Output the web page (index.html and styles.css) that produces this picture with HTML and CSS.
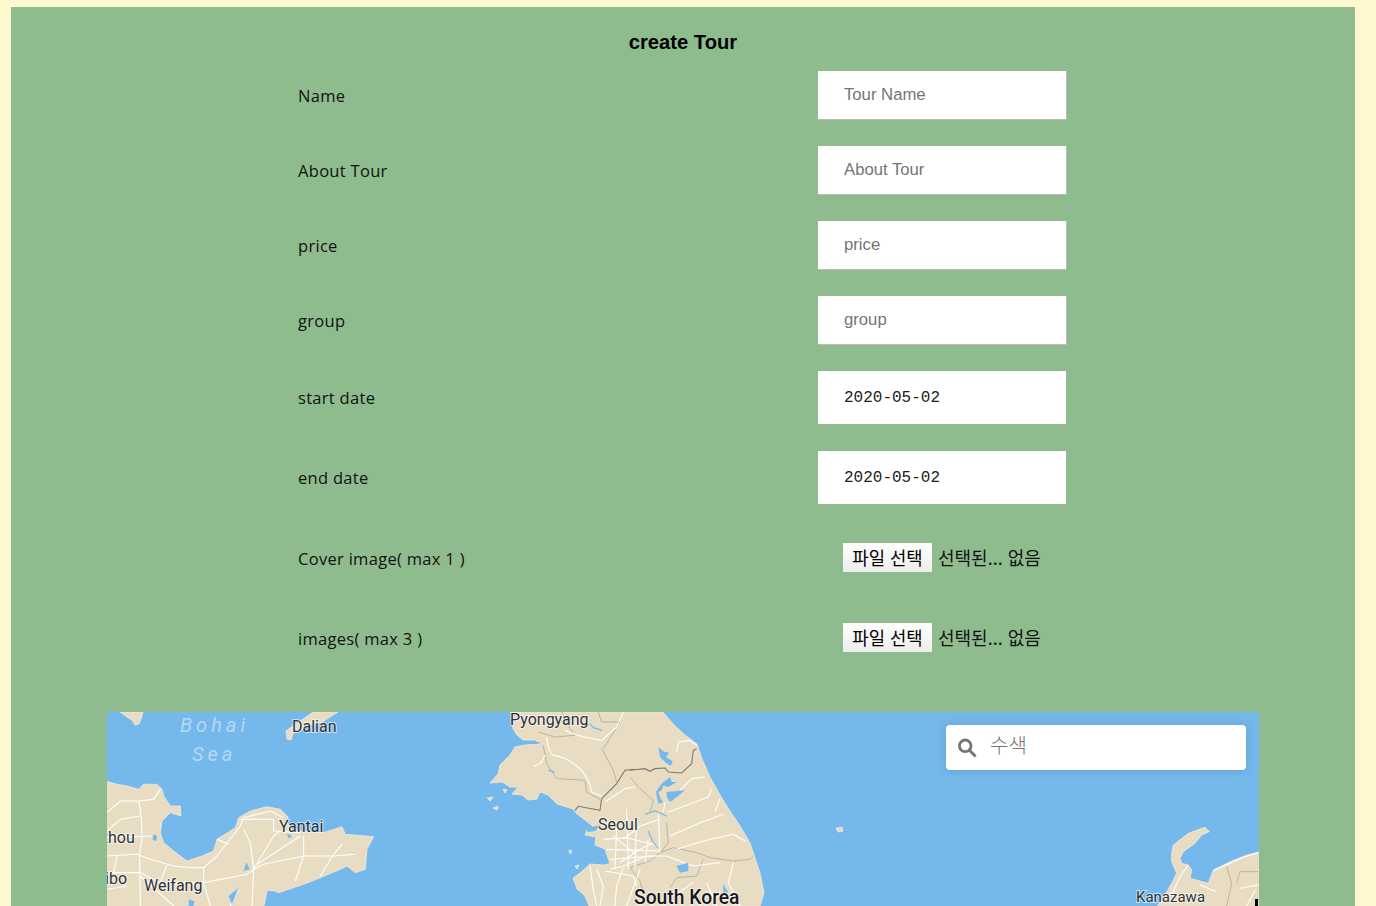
FILE: index.html
```html
<!DOCTYPE html>
<html lang="ko">
<head>
    <meta charset="UTF-8">
    <meta name="viewport" content="width=device-width, initial-scale=1.0">
    <title>create Tour</title>
    <link rel="stylesheet" href="styles.css">
</head>
<body>
    <div class="page">
        <h3 class="title">create Tour</h3>
        <form class="tour-form">
            <div class="row">
                <label class="row-label">Name</label>
                <input class="field" type="text" placeholder="Tour Name">
            </div>
            <div class="row">
                <label class="row-label">About Tour</label>
                <input class="field" type="text" placeholder="About Tour">
            </div>
            <div class="row">
                <label class="row-label">price</label>
                <input class="field" type="text" placeholder="price">
            </div>
            <div class="row">
                <label class="row-label">group</label>
                <input class="field" type="text" placeholder="group">
            </div>
            <div class="row row-tall">
                <label class="row-label row-label-date">start date</label>
                <input class="field field-date" type="text" value="2020-05-02">
            </div>
            <div class="row row-tall">
                <label class="row-label row-label-date">end date</label>
                <input class="field field-date" type="text" value="2020-05-02">
            </div>
            <div class="row row-tall">
                <label class="row-label">Cover image( max 1 )</label>
                <div class="file-pick">
                    <button class="file-button" type="button">파일 선택</button>
                    <span class="file-name">선택된... 없음</span>
                </div>
            </div>
            <div class="row row-tall">
                <label class="row-label">images( max 3 )</label>
                <div class="file-pick">
                    <button class="file-button" type="button">파일 선택</button>
                    <span class="file-name">선택된... 없음</span>
                </div>
            </div>
        </form>
        <div class="map">
            <svg class="map-art" viewBox="107 712 1152 194" width="1152" height="194">
                <!-- Liaodong tips -->
                <path class="land" d="M313 712L338 712L330 717L322 722L310 725L300 730L293 733L291 740L287 739L286 731L297 723L306 717ZM120 712L143 712L141 719L139 724L135 725L132 720L127 717Z"/>

                <!-- Shandong -->
                <g transform="translate(107 776) scale(0.3333)">
                    <path class="land" d="M-5 15L30 25L60 30L95 40L110 25L150 25L165 40L170 60L190 90L220 90L222 120L190 110L165 135L160 170L170 200L200 225L240 255L285 240L320 225L330 190L385 155L395 125L430 105L480 92L520 100L545 125L535 132L560 165L650 170L705 152L715 175L800 182L780 220L775 280L745 290L720 270L700 280L640 305L590 325L515 350L500 345L480 345L470 395L-5 395Z"/>
                    <g class="roads">
                        <path d="M0 110L40 75L95 75L140 70L160 40"/>
                        <path d="M95 75Q105 120 105 190L98 230L100 390"/>
                        <path d="M0 165L40 130L100 120"/>
                        <path d="M0 185L135 180"/>
                        <path d="M0 240L90 235L130 250L200 270L250 275L290 275L330 240L400 150L410 125L490 105L530 125"/>
                        <path d="M400 130L500 130L500 165L580 170"/>
                        <path d="M410 160L430 200L440 280L435 390"/>
                        <path d="M440 280L500 180L520 165"/>
                        <path d="M0 290L100 290L160 320L290 320L420 295L440 280L470 265L590 240L680 240L745 235"/>
                        <path d="M290 275L290 320L310 390"/>
                        <path d="M180 265L160 320"/>
                        <path d="M590 180L590 240L565 315"/>
                        <path d="M450 265L580 180"/>
                        <path d="M640 300L680 235L705 205"/>
                        <path d="M0 340L60 330M100 300L200 390M30 240L20 290"/>
                        <path d="M370 390L395 340M330 190L365 205"/>
                    </g>
                    <g class="lakes">
                        <path d="M140 175L150 180L148 195L137 192Z"/>
                        <path d="M418 258L428 280L410 285Z"/>
                        <path d="M245 370L262 375L260 390L245 390Z"/>
                        <path d="M365 360L395 335L375 385Z"/>
                        <path d="M480 345L510 348L495 362Z"/>
                        <path d="M475 385L490 378L495 390Z"/>
                        <path d="M540 172L555 180L545 188Z"/>
                    </g>
                </g>

                <!-- Korea -->
                <path class="land" d="M511 712L513 729L517 735L523 740L535 740L540 744L525 745L515 747L510 755L500 765L498 774L490 783L502 782L510 787L518 787L512 794L522 795L528 800L537 799L540 792L548 795L557 804L573 809L577 814L585 820L595 828L587 830L585 835L596 837L595 845L605 849L610 864L603 865L590 864L580 873L573 878L577 889L585 896L589 906L760 906L764 893L760 873L750 843L740 826L728 808L720 795L710 777L702 759L697 744L685 735L673 724L663 712Z"/>
                <path class="land" d="M487 798L493 797L490 801ZM503 789L507 790L505 793ZM836 828L842 827L843 831L838 832ZM493 808L498 806L497 810ZM575 866L579 865L577 869ZM569 850L572 851L570 854Z"/>

                <g transform="translate(485 712) scale(0.3333)">
                    <g class="borders">
                        <path d="M160 60L210 75L270 70L255 50L230 0"/>
                        <path d="M175 100L185 155L215 200L300 205L305 240L345 262"/>
                        <path d="M350 110L385 175L395 210"/>
                        <path d="M340 0L350 30L405 30L355 110"/>
                    </g>
                    <g class="roads">
                        <path d="M185 75Q190 120 205 130Q250 135 290 175Q315 205 320 240L350 252"/>
                        <path d="M240 55Q280 75 350 85L395 45L415 0"/>
                        <path d="M145 165L170 150L180 130"/>
                        <path d="M360 270L420 230L450 225"/>
                    </g>
                    <g class="streams">
                        <path d="M315 35L325 47L352 55"/>
                        <path d="M90 85L120 95L165 92"/>
                        <path d="M190 175L210 180"/>
                    </g>
                    <path class="border-strong" d="M270 295L280 283L345 295L350 260L395 215L420 175L450 172"/>
                </g>

                <g transform="translate(630 712) scale(0.3333)">
                    <g class="borders">
                        <path d="M0 195L25 225L70 265L60 300"/>
                    </g>
                    <g class="roads">
                        <path d="M140 120L145 90L180 85L200 100"/>
                        <path d="M225 195L185 200L150 235"/>
                        <path d="M245 230L235 255L170 280L115 300"/>
                        <path d="M100 300L105 270M270 260L255 300"/>
                    </g>
                    <g class="lakes">
                        <path d="M85 105L95 115L105 120L118 122L108 135L128 148L122 162L105 150L90 135Z"/>
                        <path d="M120 195L125 210L140 210L115 225L100 220L95 235L85 240L92 260L100 270L85 275L78 240L95 215Z"/>
                        <path d="M110 240L165 235L140 255L120 270L110 255Z"/>
                    </g>
                    <path class="border-strong" d="M0 175L45 170L60 178L75 170L105 168L115 180L155 183L185 155L190 115L200 110"/>
                </g>

                <g transform="translate(560 806) scale(0.3333)">
                    <g class="borders">
                        <path d="M300 140L340 125L410 140L450 155L520 165L570 160L580 150"/>
                        <path d="M300 140L270 165L210 185L240 225L250 260"/>
                        <path d="M430 160L410 210L350 215L330 245"/>
                        <path d="M320 50L325 110L300 140"/>
                    </g>
                    <g class="roads">
                        <path d="M330 90L420 50L490 25"/>
                        <path d="M350 130L430 105L520 85L555 105"/>
                        <path d="M130 100L200 95L300 120M140 130L300 135M150 160L280 150"/>
                        <path d="M170 60L165 190M200 10L205 190M230 40L225 185M265 100L255 170M295 20L300 140"/>
                        <path d="M150 190L190 180L260 150L320 150L400 180L480 170"/>
                        <path d="M190 100L240 60L300 40M160 90L220 140L280 110M180 170L240 130"/>
                        <path d="M190 185L170 240L165 300M110 190L130 240L120 300M240 190L200 300"/>
                        <path d="M90 180L100 250L110 300M135 195L220 210L230 240"/>
                        <path d="M440 230L470 300M520 170L505 230L540 300M400 230L340 270"/>
                    </g>
                    <g class="lakes">
                        <path d="M350 180L385 170L385 195L360 200Z"/>
                        <path d="M490 235L505 260L490 265Z"/>
                        <path d="M80 68L125 55L105 75L82 78Z"/>
                    </g>
                    <g class="streams">
                        <path d="M265 75L280 110L295 125"/>
                        <path d="M255 25L285 15L320 30"/>
                    </g>
                </g>

                <!-- Noto and Honshu -->
                <g transform="translate(1130 820) scale(0.3333)">
                    <path class="land" d="M125 100L130 75L175 40L225 22L238 35L215 45L195 70L160 95L150 115L155 130L175 135L185 150L180 175L235 190L250 150L300 125L350 105L392 95L392 262L80 262L105 225L125 190L140 160L125 125Z"/>
                    <g class="lakes">
                        <path d="M160 105L190 105L180 125L155 120Z"/>
                    </g>
                    <g class="borders">
                        <path d="M290 140L305 190L290 258M320 190L330 155L385 155"/>
                    </g>
                    <g class="roads">
                        <path d="M385 98L340 112L250 152"/>
                        <path d="M175 135L150 170L125 225"/>
                        <path d="M210 195L260 215M330 205L385 195M350 258L375 210"/>
                    </g>
                </g>

                <g class="place-labels">
                    <text class="sea-label" x="180" y="732">Bohai</text>
                    <text class="sea-label" x="192" y="761">Sea</text>
                    <text class="place" x="292" y="732">Dalian</text>
                    <text class="place" x="510" y="725">Pyongyang</text>
                    <text class="place" x="279" y="832">Yantai</text>
                    <text class="place" x="100" y="843">zhou</text>
                    <text class="place" x="105" y="884">ibo</text>
                    <text class="place" x="144" y="891">Weifang</text>
                    <text class="place" x="598" y="830">Seoul</text>
                    <text class="place place-small" x="1136" y="902">Kanazawa</text>
                    <text class="country" x="634" y="904">South Korea</text>
                </g>
                <rect class="map-mark" x="1255" y="899" width="3" height="7"/>
            </svg>
            <div class="geocoder">
                <svg class="geocoder-icon" viewBox="0 0 22 22" width="22" height="22">
                    <circle cx="8.2" cy="8.8" r="5.8"/>
                    <path d="M12.4 13.2L18.6 19.4"/>
                </svg>
                <input class="geocoder-input" type="text" placeholder="수색">
            </div>
        </div>
    </div>
</body>
</html>
```

FILE: styles.css
```css
html, body {
    height: 906px;
    overflow: hidden;
}
body {
    margin: 0;
    padding: 7px 21px 0 11px;
    box-sizing: border-box;
    background-color: #fff8cf;
    font-family: "Open Sans", sans-serif;
}
.page {
    height: 899px;
    background-color: #8fbc8f;
    overflow: hidden;
}
.title {
    margin: 0;
    padding-top: 23px;
    height: 28px;
    line-height: 24px;
    text-align: center;
    font-family: "Liberation Sans", sans-serif;
    font-size: 20.2px;
    font-weight: 700;
    color: #000;
}
.tour-form {
    padding-left: 287px;
}
.row {
    display: grid;
    grid-template-columns: 520px 249px;
    align-items: center;
    height: 75px;
    padding-bottom: 1px;
    box-sizing: border-box;
}
.row-tall {
    height: 80px;
}
.row-label {
    color: #111;
    font-size: 16.5px;
    letter-spacing: 0.3px;
    padding-top: 1px;
}
.row-label-date {
    padding-top: 0;
    padding-bottom: 1px;
}
.field {
    width: 249px;
    height: 49px;
    margin-top: 1px;
    padding: 0 0 0 26px;
    box-sizing: border-box;
    border: 1px solid #bbb;
    border-width: 0 1px 1px 0;
    background-color: #fff;
    font-family: "Liberation Sans", sans-serif;
    font-size: 16.7px;
}
.field::placeholder {
    color: #757575;
}
.field-date {
    width: 248px;
    height: 53px;
    margin-top: 0;
    border: none;
    font-family: "Liberation Mono", monospace;
    font-size: 16px;
    color: #222;
}
.file-pick {
    display: flex;
    align-items: center;
    padding-left: 25px;
    font-family: "Noto Sans CJK KR", sans-serif;
    font-size: 18px;
}
.file-button {
    width: 89px;
    height: 29px;
    padding: 0 0 2px;
    border: none;
    background: linear-gradient(#fff, #ededed);
    font-family: "Noto Sans CJK KR", sans-serif;
    font-size: 17.8px;
    color: #000;
}
.file-name {
    margin: 0 0 2px 6px;
    color: #111;
    white-space: nowrap;
}
.map {
    position: relative;
    width: 1152px;
    height: 194px;
    margin: 34px 0 0 96px;
    background-color: #75b9ec;
    overflow: hidden;
}
.map-art {
    display: block;
}
.land {
    fill: #e8dcc3;
    stroke: #f1eadb;
    stroke-width: 0.8;
    stroke-linejoin: round;
    vector-effect: non-scaling-stroke;
}
.roads path {
    fill: none;
    stroke: #fff;
    stroke-width: 1.1;
    stroke-linejoin: round;
    vector-effect: non-scaling-stroke;
}
.borders path {
    fill: none;
    stroke: #b8af9e;
    stroke-width: 0.9;
    vector-effect: non-scaling-stroke;
}
.border-strong {
    fill: none;
    stroke: #7d7a72;
    stroke-width: 1.1;
    vector-effect: non-scaling-stroke;
}
.streams path {
    fill: none;
    stroke: #75b9ec;
    stroke-width: 1.2;
    vector-effect: non-scaling-stroke;
}
.lakes path {
    fill: #75b9ec;
}
.place-labels text {
    font-family: Roboto, sans-serif;
    font-size: 16px;
    fill: #2c3238;
    paint-order: stroke;
    stroke: rgba(255, 255, 255, 0.6);
    stroke-width: 2px;
}
.place-labels .place-small {
    font-size: 15px;
}
.place-labels .sea-label {
    font-size: 20px;
    font-style: italic;
    letter-spacing: 4px;
    fill: #b5d8f3;
    stroke: none;
}
.place-labels .country {
    font-size: 19.3px;
    font-weight: 500;
    fill: #15191c;
}
.map-mark {
    fill: #000;
}
.geocoder {
    position: absolute;
    top: 13px;
    right: 13px;
    display: flex;
    align-items: center;
    width: 300px;
    height: 45px;
    border-radius: 4px;
    background-color: #fff;
    box-shadow: 0 0 10px 2px rgba(0, 0, 0, 0.1);
}
.geocoder-icon {
    flex: none;
    margin-left: 11px;
}
.geocoder-icon circle, .geocoder-icon path {
    fill: none;
    stroke: #757575;
    stroke-width: 2.8;
}
.geocoder-input {
    flex: 1;
    min-width: 0;
    margin-left: 11px;
    padding: 0 0 6px;
    border: none;
    outline: none;
    background: transparent;
    font-family: "Noto Sans CJK KR", sans-serif;
    font-size: 20px;
    font-weight: 300;
}
.geocoder-input::placeholder {
    color: #757575;
}
```
